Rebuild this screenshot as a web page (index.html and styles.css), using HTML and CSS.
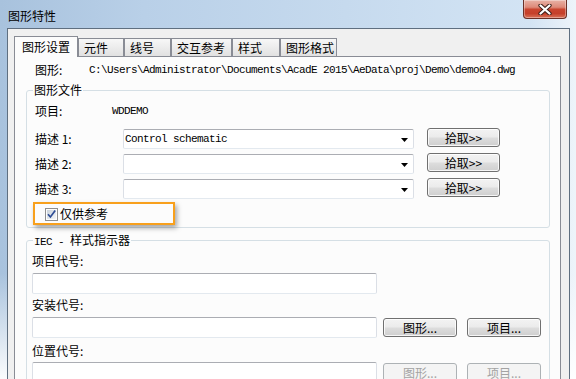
FILE: index.html
```html
<!DOCTYPE html>
<html lang="zh">
<head>
<meta charset="utf-8">
<title>图形特性</title>
<link rel="stylesheet" href="styles.css">
</head>
<body>
<div class="window">
  <div class="titlebar">
    <span class="title">图形特性</span>
    <div class="close">
      <svg width="14" height="11" viewBox="0 0 14 11"><path d="M2.5 1.5 L11.5 9.5 M11.5 1.5 L2.5 9.5" stroke="#3c1d17" stroke-width="4.2" stroke-linecap="round"/><path d="M2.5 1.5 L11.5 9.5 M11.5 1.5 L2.5 9.5" stroke="#ffffff" stroke-width="2.3" stroke-linecap="round"/></svg>
    </div>
  </div>
  <div class="client">
    <div class="tabs">
      <div class="tab active">图形设置</div>
      <div class="tab w46">元件</div>
      <div class="tab w47">线号</div>
      <div class="tab w61">交互参考</div>
      <div class="tab w48">样式</div>
      <div class="tab w57">图形格式</div>
    </div>
    <div class="panel">
      <div class="path-row"><span class="path-label">图形:</span><span class="mono">C:\Users\Administrator\Documents\AcadE 2015\AeData\proj\Demo\demo04.dwg</span></div>

      <fieldset class="group g1">
        <legend>图形文件</legend>
        <div class="item-row"><span class="item-label">项目:</span><span class="mono">WDDEMO</span></div>
        <div class="desc-row first">
          <span class="desc-label">描述 1:</span>
          <div class="combo"><span class="mono">Control schematic</span><svg class="arrow" width="7" height="4" viewBox="0 0 7 4"><path d="M0 0 H7 L3.5 4 Z" fill="#000"/></svg></div>
          <div class="btn pick">拾取&gt;&gt;</div>
        </div>
        <div class="desc-row">
          <span class="desc-label">描述 2:</span>
          <div class="combo"><span class="mono"></span><svg class="arrow" width="7" height="4" viewBox="0 0 7 4"><path d="M0 0 H7 L3.5 4 Z" fill="#000"/></svg></div>
          <div class="btn pick">拾取&gt;&gt;</div>
        </div>
        <div class="desc-row">
          <span class="desc-label">描述 3:</span>
          <div class="combo"><span class="mono"></span><svg class="arrow" width="7" height="4" viewBox="0 0 7 4"><path d="M0 0 H7 L3.5 4 Z" fill="#000"/></svg></div>
          <div class="btn pick">拾取&gt;&gt;</div>
        </div>
        <div class="check-row">
          <svg class="checkbox" width="13" height="13" viewBox="0 0 13 13">
            <defs><linearGradient id="cg" x1="0" y1="0" x2="1" y2="1"><stop offset="0" stop-color="#cbd3dc"/><stop offset="1" stop-color="#f4f6f8"/></linearGradient></defs>
            <rect x="0.5" y="0.5" width="12" height="12" fill="#fdfdfd" stroke="#8f8f8f"/>
            <rect x="2" y="2" width="9" height="9" fill="url(#cg)"/>
            <path d="M3 6.3 L5.4 9 L10.2 2.6" fill="none" stroke="#2d4c95" stroke-width="1.7"/>
          </svg>
          <span class="check-label">仅供参考</span>
        </div>
      </fieldset>

      <fieldset class="group g2">
        <legend><span class="mono">IEC - </span>样式指示器</legend>
        <div class="field-label first">项目代号:</div>
        <div class="input-row"><div class="input"></div></div>
        <div class="field-label">安装代号:</div>
        <div class="input-row">
          <div class="input"></div>
          <div class="btn act first-btn">图形...</div>
          <div class="btn act second-btn">项目...</div>
        </div>
        <div class="field-label third">位置代号:</div>
        <div class="input-row last">
          <div class="input"></div>
          <div class="btn act first-btn disabled">图形...</div>
          <div class="btn act second-btn disabled">项目...</div>
        </div>
      </fieldset>
    </div>
  </div>
</div>
</body>
</html>
```

FILE: styles.css
```css
* { box-sizing: border-box; }
html, body { margin: 0; padding: 0; }
body {
  width: 576px;
  height: 379px;
  overflow: hidden;
  background: #ffffff;
  font-family: "Noto Sans CJK SC", "Liberation Sans", sans-serif;
  font-size: 12px;
  color: #000;
}
.mono {
  font-family: "Liberation Mono", "DejaVu Sans Mono", monospace;
  font-size: 11px;
  letter-spacing: -0.6px;
  white-space: pre;
}

/* window frame */
.window {
  width: 576px;
  height: 379px;
  display: flex;
  flex-direction: column;
  overflow: hidden;
  background:
    linear-gradient(to bottom, rgba(255,255,255,0) 72%, rgba(255,255,255,0.95) 100%),
    linear-gradient(to right, #a8c2dd 0%, #b9d0e8 25%, #c6daee 60%, #d3e4f4 92%, #eef4fa 100%);
}
.titlebar {
  flex: none;
  height: 28px;
  display: flex;
  justify-content: space-between;
  align-items: flex-start;
  padding: 0 9px 0 8px;
}
.title {
  margin-top: 8px;
  line-height: 15px;
  font-size: 12px;
}
.close {
  width: 44px;
  height: 19px;
  border: 1px solid #6a3128;
  border-top: none;
  border-radius: 0 0 4px 4px;
  background: linear-gradient(to bottom, #e8b2a6 0%, #de8a79 40%, #c9452f 52%, #c5402a 75%, #d9735a 100%);
  box-shadow: inset 0 0 0 1px rgba(255,255,255,0.35);
  display: flex;
  align-items: center;
  justify-content: center;
}

/* client area */
.client {
  flex: 1;
  min-height: 0;
  margin: 0 6px 0 7px;
  border: 1px solid #5f6f80;
  border-bottom: none;
  background: #f0f0f0;
  padding: 7px 0 0 6px;
  display: flex;
  flex-direction: column;
}

/* tabs */
.tabs {
  flex: none;
  height: 20px;
  display: flex;
  align-items: flex-end;
  position: relative;
  z-index: 1;
}
.tab {
  height: 18px;
  border: 1px solid #898c95;
  border-bottom: none;
  background: linear-gradient(to bottom, #f7f7f7 0%, #ececec 50%, #e1e1e1 100%);
  padding: 0 0 0 5px;
  line-height: 17px;
  white-space: nowrap;
}
.tab.active {
  width: 64px;
  height: 21px;
  margin-bottom: -1px;
  background: #fcfcfc;
  padding: 1px 0 0 7px;
  line-height: 17px;
}
.w46 { width: 46px; }
.w47 { width: 47px; }
.w48 { width: 48px; }
.w57 { width: 57px; }
.w61 { width: 61px; }

.panel {
  flex: 1;
  width: 547px;
  border: 1px solid #898c95;
  border-bottom: none;
  background: #fcfcfc;
  display: flex;
  flex-direction: column;
}

.path-row {
  margin-top: 6px;
  height: 14px;
  padding-left: 20px;
  display: flex;
  align-items: center;
  line-height: 14px;
}
.path-label { width: 54px; }

/* group boxes */
.group {
  margin: 6px 10px 0 11px;
  padding: 0;
  border: 1px solid #d5dfe5;
  border-radius: 3px;
  min-width: 0;
}
.group legend {
  margin-left: 6px;
  padding: 0 1px;
  line-height: 14px;
  height: 14px;
}
.g1 { padding-bottom: 2px; }
.g2 { margin-top: 5px; padding-bottom: 40px; }

.item-row {
  margin-top: 7px;
  height: 14px;
  padding-left: 8px;
  display: flex;
  align-items: center;
  line-height: 14px;
}
.item-label { width: 77px; }

.desc-row {
  margin-top: 5px;
  height: 20px;
  padding-left: 8px;
  display: flex;
  align-items: flex-start;
}
.desc-row.first { margin-top: 11px; }
.desc-label {
  width: 88px;
  line-height: 20px;
  white-space: pre;
}
.combo {
  width: 291px;
  height: 20px;
  background: #fff;
  border: 1px solid #dbdfe6;
  border-top-color: #abadb3;
  border-bottom-color: #e3e9ef;
  border-radius: 2px;
  display: flex;
  align-items: center;
  justify-content: space-between;
  padding: 0 5px 0 1px;
}
.combo .arrow { flex: none; margin-top: 1px; }

.btn {
  height: 19px;
  border: 1px solid #707070;
  border-radius: 3px;
  background: linear-gradient(to bottom, #f3f3f3 0%, #ebebeb 48%, #dddddd 52%, #cfcfcf 100%);
  box-shadow: inset 0 0 0 1px rgba(255,255,255,0.8);
  display: flex;
  align-items: center;
  justify-content: center;
  line-height: 17px;
  white-space: nowrap;
}
.pick {
  width: 73px;
  margin-left: 13px;
  margin-top: -1px;
}

.check-row {
  margin: 3px 0 0 6px;
  width: 142px;
  height: 23px;
  border: 2px solid #f8a01c;
  box-shadow: 2px 3px 5px rgba(0,0,0,0.35);
  display: flex;
  align-items: center;
  padding-left: 10px;
}
.checkbox { flex: none; margin-top: 1px; }
.check-label { margin-left: 2px; line-height: 14px; }

.field-label {
  margin-top: 4px;
  height: 14px;
  line-height: 14px;
  padding-left: 5px;
}
.field-label.first { margin-top: 7px; }
.field-label.third { margin-top: 6px; }

.input-row {
  margin-top: 5px;
  height: 21px;
  padding-left: 5px;
  display: flex;
  align-items: flex-start;
}
.input-row.last { margin-top: 4px; }
.input {
  width: 345px;
  height: 21px;
  background: #fff;
  border: 1px solid #dbdfe6;
  border-top-color: #abadb3;
  border-bottom-color: #e3e9ef;
  border-radius: 2px;
}
.act {
  width: 74px;
  margin-top: 1px;
}
.first-btn { margin-left: 6px; }
.second-btn { margin-left: 10px; }
.btn.disabled {
  border-color: #adb2b5;
  background: #f4f4f4;
  box-shadow: none;
  color: #a3a3a3;
}
```
